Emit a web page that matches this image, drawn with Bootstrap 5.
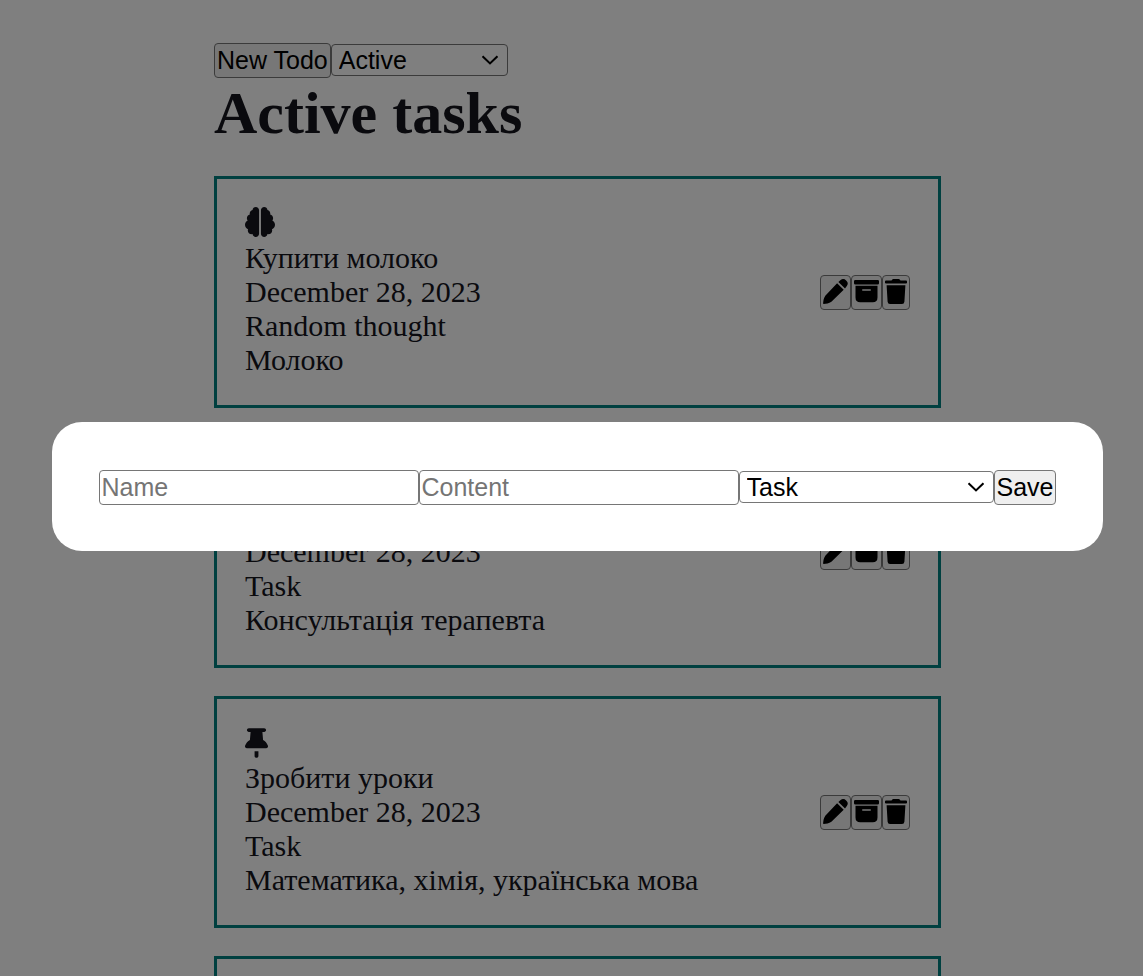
<!DOCTYPE html>
<html lang="en">
<head>
<meta charset="utf-8">
<meta name="viewport" content="width=device-width, initial-scale=1">
<title>Active tasks</title>
<link href="https://cdn.jsdelivr.net/npm/bootstrap@5.3.0/dist/css/bootstrap.min.css" rel="stylesheet">
<style>
  body { font: 30px/34px "Liberation Serif", serif; color: #14141c; background: #fff; padding-left: 12px; }
  .todo-page { max-width: 727px; padding-top: 43px; }
  .page-title { font-size: 60px; line-height: 70px; font-weight: 700; margin: 0 0 28px; }
  .ctl { font: 25px/29px "Liberation Sans", sans-serif; color: #000; border: 1px solid #767676; border-radius: 4px; background-color: #fff; padding: 2px; height: 35px; }
  button.ctl { background-color: #efefef; white-space: nowrap; }
  input.ctl { width: 320px; min-width: 0; }
  input.ctl::placeholder { color: #757575; opacity: 1; }
  select.ctl { appearance: none; height: 32px; margin-bottom: 1px; padding: 0 30px 0 7px;
    background-image: url("data:image/svg+xml,%3Csvg xmlns='http://www.w3.org/2000/svg' viewBox='0 0 18 10'%3E%3Cpath d='M1.5 1.2 9 8.4l7.500-7.200' fill='none' stroke='%23000' stroke-width='2.100'/%3E%3C/svg%3E");
    background-repeat: no-repeat; background-position: right 8px center; background-size: 18px 10px; }
  .filter { width: 177px; }
  select.kind { width: 255px; }
  .todo-list { gap: 28px; }
  .todo { border: 3px solid #008080; padding: 28px; }
  .todo-icon { height: 34px; }
  .todo-icon svg, .ctl svg { display: block; fill: currentColor; }
  .ctl svg { margin-bottom: 2px; }
  .overlay { padding: 0 0 3px 12px; background: rgba(0, 0, 0, .5); }
  .dialog { padding: 48px 47px 46px; border-radius: 30px; background: #fff; }
</style>
</head>
<body class="overflow-hidden">
<svg class="d-none" aria-hidden="true">
  <symbol id="brain" viewBox="0 0 512 512"><path d="M184 0c30.900 0 56 25.100 56 56v400c0 30.900-25.100 56-56 56-28.900 0-52.700-21.900-55.700-50.100-5.200 1.400-10.700 2.100-16.300 2.100-35.300 0-64-28.700-64-64 0-7.400 1.300-14.600 3.600-21.200C21.400 367.400 0 338.200 0 304c0-31.900 18.700-59.500 45.800-72.300C37.100 220.800 32 207 32 192c0-30.700 21.600-56.300 50.400-62.600C80.800 123.900 80 118 80 112c0-29.900 20.600-55.100 48.300-62.100C131.300 21.900 155.100 0 184 0zM328 0c28.900 0 52.600 21.900 55.700 49.900 27.800 7 48.300 32.100 48.300 62.100 0 6-.8 11.900-2.400 17.400 28.800 6.200 50.400 31.900 50.400 62.600 0 15-5.100 28.800-13.800 39.700C493.300 244.500 512 272.100 512 304c0 34.200-21.400 63.400-51.600 74.800 2.300 6.600 3.600 13.800 3.600 21.200 0 35.300-28.700 64-64 64-5.600 0-11.100-.7-16.300-2.100-3 28.200-26.800 50.100-55.700 50.100-30.900 0-56-25.100-56-56V56c0-30.900 25.100-56 56-56z"/></symbol>
  <symbol id="pin" viewBox="0 0 384 512"><path d="M32 48c0-17.700 14.300-32 32-32h256c17.700 0 32 14.300 32 32s-14.300 32-32 32h-29.500l11.400 132.200c36.700 19.900 65.700 53.200 79.500 94.700l1 3c3.300 9.800 1.600 20.500-4.400 28.800S362.300 352 352 352H32c-10.300 0-19.900-4.900-26-13.300s-7.700-19.100-4.400-28.800l1-3c13.800-41.500 42.800-74.800 79.500-94.700L93.500 80H64c-17.700 0-32-14.300-32-32zm128 352h64v80c0 17.700-14.300 32-32 32s-32-14.300-32-32z"/></symbol>
  <symbol id="pencil" viewBox="0 0 25 25"><path d="M14.100 4.300l6.600 6.500L8.400 22.700C6 24.500 3 24.700.7 24.900c-.4 0-.7-.3-.6-.7.3-2.400.4-4.900 2.200-7.500zM15.400 3l2.200-2.100c1.900-1.300 4-1.100 5.500.5 1.900 1.600 2.200 3.800.7 5.700L22 9.500z"/></symbol>
  <symbol id="archive" viewBox="0 0 25 25"><path d="M1.300 1h22.400Q25 1 25 2.200v2Q25 5.400 23.700 5.400H1.300Q0 5.400 0 4.200v-2Q0 1 1.300 1zM1.500 6.800h22v11.700q0 4.700-4.700 4.700H6.200q-4.700 0-4.700-4.700zM8.800 10.200q-.8 0-.8.800t.8.800h7.400q.8 0 .8-.8t-.8-.8z"/></symbol>
  <symbol id="trash" viewBox="0 0 22 25"><path d="M1 1.600h5.500L7.300.5Q7.700 0 8.300 0h5.400q.6 0 1 .5l.8 1.100H21q1 0 1 1v1.200q0 .8-1 .8H1q-1 0-1-.8V2.600q0-1 1-1zM1.600 6.200h18.800l-1 16.500Q19.200 25 17 25H5q-2.200 0-2.400-2.300z"/></symbol>
</svg>

<main class="todo-page mx-auto">
  <div class="d-flex align-items-center">
    <button class="ctl" type="button">New Todo</button>
    <select class="ctl filter" aria-label="Filter"><option>Active</option><option>Archived</option></select>
  </div>
  <h1 class="page-title">Active tasks</h1>
  <div class="todo-list d-flex flex-column">
    <article class="todo d-flex justify-content-between align-items-center">
      <div>
        <div class="todo-icon"><svg width="30" height="30"><use href="#brain"/></svg></div>
        <div>Купити молоко</div><div>December 28, 2023</div><div>Random thought</div><div>Молоко</div>
      </div>
      <div class="d-flex">
        <button class="ctl" type="button" aria-label="Edit"><svg width="25" height="25"><use href="#pencil"/></svg></button>
        <button class="ctl" type="button" aria-label="Archive"><svg width="25" height="25"><use href="#archive"/></svg></button>
        <button class="ctl" type="button" aria-label="Delete"><svg width="22" height="25"><use href="#trash"/></svg></button>
      </div>
    </article>
    <article class="todo d-flex justify-content-between align-items-center">
      <div>
        <div class="todo-icon"><svg width="23" height="31"><use href="#pin"/></svg></div>
        <div>Лікар</div><div>December 28, 2023</div><div>Task</div><div>Консультація терапевта</div>
      </div>
      <div class="d-flex">
        <button class="ctl" type="button" aria-label="Edit"><svg width="25" height="25"><use href="#pencil"/></svg></button>
        <button class="ctl" type="button" aria-label="Archive"><svg width="25" height="25"><use href="#archive"/></svg></button>
        <button class="ctl" type="button" aria-label="Delete"><svg width="22" height="25"><use href="#trash"/></svg></button>
      </div>
    </article>
    <article class="todo d-flex justify-content-between align-items-center">
      <div>
        <div class="todo-icon"><svg width="23" height="31"><use href="#pin"/></svg></div>
        <div>Зробити уроки</div><div>December 28, 2023</div><div>Task</div><div>Математика, хімія, українська мова</div>
      </div>
      <div class="d-flex">
        <button class="ctl" type="button" aria-label="Edit"><svg width="25" height="25"><use href="#pencil"/></svg></button>
        <button class="ctl" type="button" aria-label="Archive"><svg width="25" height="25"><use href="#archive"/></svg></button>
        <button class="ctl" type="button" aria-label="Delete"><svg width="22" height="25"><use href="#trash"/></svg></button>
      </div>
    </article>
    <article class="todo"></article>
  </div>
</main>

<div class="overlay position-fixed top-0 start-0 w-100 h-100 d-flex align-items-center justify-content-center" role="dialog" aria-modal="true" aria-label="New Todo">
  <form class="dialog d-flex align-items-center">
    <input class="ctl" type="text" placeholder="Name" aria-label="Name">
    <input class="ctl" type="text" placeholder="Content" aria-label="Content">
    <select class="ctl kind" aria-label="Category"><option>Task</option><option>Random thought</option></select>
    <button class="ctl" type="submit">Save</button>
  </form>
</div>
<script src="https://cdn.jsdelivr.net/npm/bootstrap@5.3.0/dist/js/bootstrap.bundle.min.js"></script>
</body>
</html>
